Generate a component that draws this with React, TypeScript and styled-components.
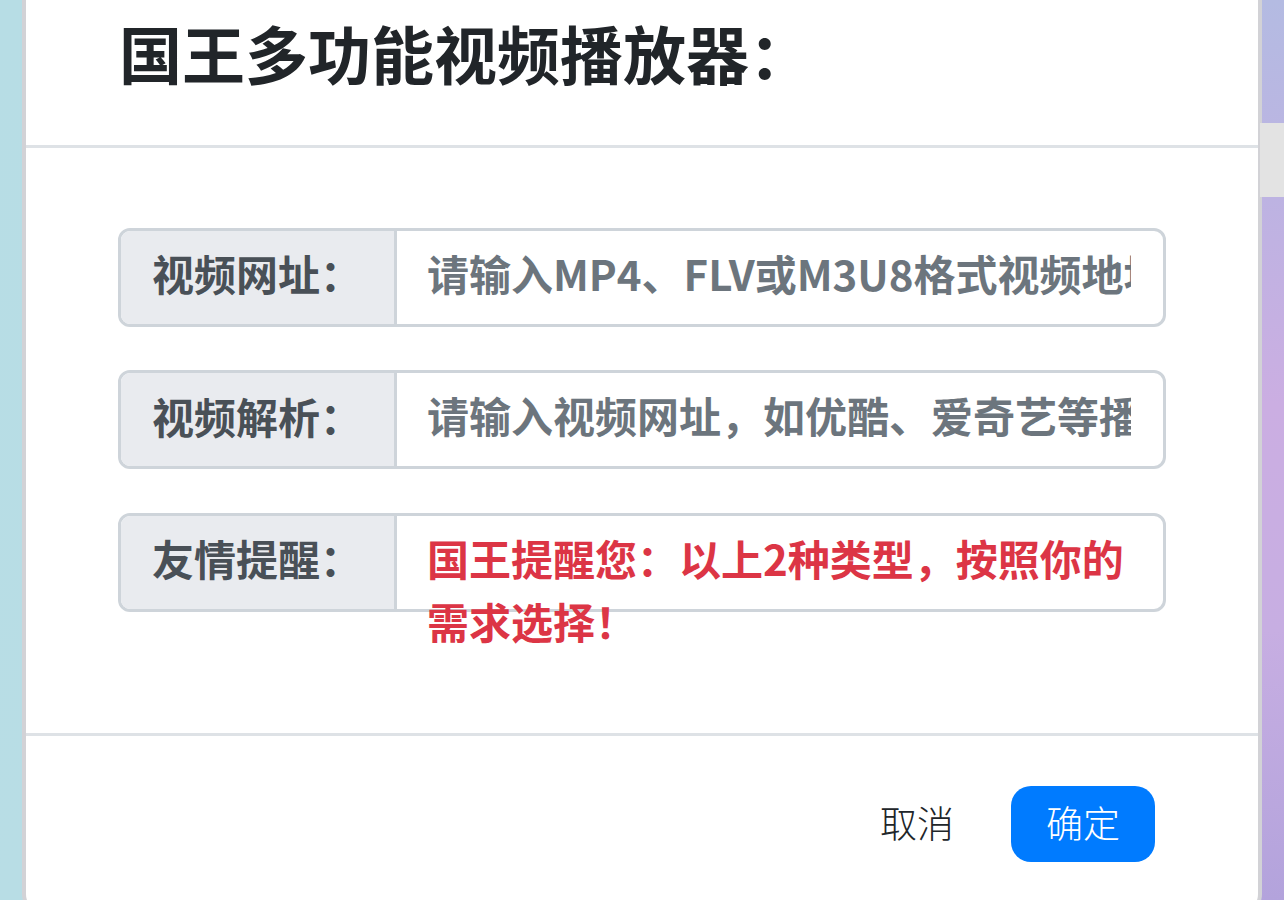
import React from 'react';
import styled, {createGlobalStyle} from 'styled-components';

const GlobalStyle = createGlobalStyle`
  html, body {
    margin: 0;
    padding: 0;
    height: 100%;
    overflow: hidden;
  }

  body {
    font-family: "Noto Sans CJK SC", "Noto Sans", sans-serif;
  }

  * {
    box-sizing: border-box;
  }
`;

const Backdrop = styled.div`
  position: relative;
  height: 900px;
  padding: 0 22px;
  overflow: hidden;
  background:
    linear-gradient(180deg, #b4bbe2 0%, #bdb3e2 22%, #cbaee2 45%, #c7aee2 70%, #b3a3dc 100%) right / 50% 100% no-repeat,
    linear-gradient(180deg, #b7dde5 0%, #b8dde5 100%) left / 50% 100% no-repeat;
`;

const ScrollThumb = styled.div`
  position: absolute;
  top: 123px;
  right: 0;
  width: 24px;
  height: 74px;
  background: #e3e3e3;
`;

const Modal = styled.div`
  height: 918px;
  border: 4px solid #d2d2d6;
  border-top: 0;
  border-radius: 0 0 24px 24px;
  background: #fff;
`;

const Header = styled.div`
  height: 148px;
  padding: 5px 92px 0;
  border-bottom: 3px solid #dee2e6;
`;

const Title = styled.h5`
  margin: 0;
  color: #212529;
  font-size: 63px;
  font-weight: 700;
  line-height: 94px;
  padding-left: 1px;
`;

const Body = styled.div`
  height: 588px;
  padding: 79.5px 92px 0;
  border-bottom: 3px solid #dee2e6;
`;

const Group = styled.div`
  display: flex;
  height: 99px;
  margin-bottom: 43.5px;
  border: 3px solid #ced4da;
  border-radius: 12px;
`;

const Label = styled.div`
  display: flex;
  flex: 0 0 276px;
  align-items: center;
  padding: 0 0 9px 31px;
  border-right: 3px solid #ced4da;
  border-radius: 9px 0 0 9px;
  background: #e9ebef;
  color: #495057;
  font-size: 42px;
  font-weight: 700;
  white-space: nowrap;
`;

const Input = styled.input`
  flex: 1;
  min-width: 0;
  padding: 0 32px 10px 30px;
  border: 0;
  outline: 0;
  border-radius: 0 9px 9px 0;
  background: transparent;
  font-family: inherit;
  font-size: 42px;
  font-weight: 700;

  &::placeholder {
    color: #6c757d;
    opacity: 1;
  }
`;

const Notice = styled.div`
  flex: 1;
  min-width: 0;
  padding: 10px 32px 0 30px;
  color: #dc3545;
  font-size: 42px;
  font-weight: 700;
  line-height: 63px;
`;

const Footer = styled.div`
  display: flex;
  justify-content: flex-end;
  align-items: center;
  gap: 22px;
  padding: 50px 103px 0 0;
`;

const Button = styled.button<{$primary?: boolean}>`
  height: 76px;
  padding: 0 35px 4px;
  border: 0;
  border-radius: 20px;
  background: ${({$primary}) => ($primary ? '#007bff' : 'transparent')};
  color: ${({$primary}) => ($primary ? '#fff' : '#212529')};
  font-family: inherit;
  font-size: 37px;
  font-weight: 300;
`;

const App: React.FC = () => {
  return (
    <Backdrop>
      <GlobalStyle/>
      <Modal>
        <Header>
          <Title>国王多功能视频播放器：</Title>
        </Header>
        <Body>
          <Group>
            <Label>视频网址：</Label>
            <Input placeholder={'请输入MP4、FLV或M3U8格式视频地址'}/>
          </Group>
          <Group>
            <Label>视频解析：</Label>
            <Input placeholder={'请输入视频网址，如优酷、爱奇艺等播放地址'}/>
          </Group>
          <Group>
            <Label>友情提醒：</Label>
            <Notice>国王提醒您：以上2种类型，按照你的需求选择！</Notice>
          </Group>
        </Body>
        <Footer>
          <Button>取消</Button>
          <Button $primary>确定</Button>
        </Footer>
      </Modal>
      <ScrollThumb/>
    </Backdrop>
  );
};

export default App;
